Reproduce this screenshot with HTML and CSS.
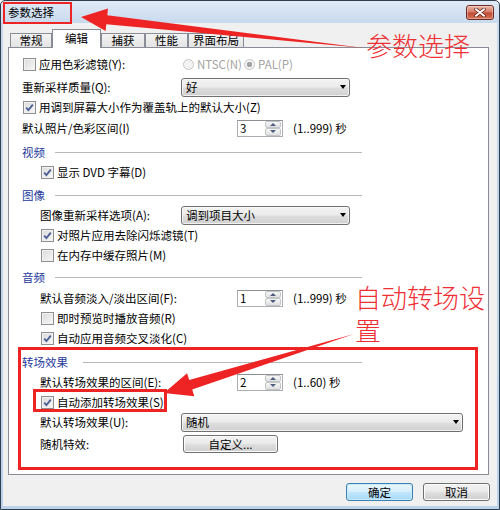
FILE: index.html
```html
<!DOCTYPE html>
<html lang="zh-CN">
<head>
<meta charset="utf-8">
<title>参数选择</title>
<link rel="stylesheet" href="styles.css">
</head>
<body>
<div class="screen">
  <div class="window">
    <div class="titlebar">
      <span class="title">参数选择</span>
      <span class="close"><svg width="12" height="9" viewBox="0 0 12 9"><path d="M2 1.2 L10 7.8 M10 1.2 L2 7.8" stroke="#5a1c14" stroke-width="3.4" stroke-linecap="round"/><path d="M2 1.2 L10 7.8 M10 1.2 L2 7.8" stroke="#fff" stroke-width="2" stroke-linecap="round"/></svg></span>
    </div>
    <div class="client">
      <div class="tabs">
        <div class="tab w42">常规</div>
        <div class="tab active">编辑</div>
        <div class="tab w44">捕获</div>
        <div class="tab w43">性能</div>
        <div class="tab w56">界面布局</div>
      </div>
      <div class="panel">
        <div class="row">
          <div class="lbl"><span class="cb"></span>应用色彩滤镜(Y):</div>
          <div class="radios">
            <span class="radio"><span class="dot"></span>NTSC(N)</span>
            <span class="radio on"><span class="dot"></span>PAL(P)</span>
          </div>
        </div>
        <div class="row gap3">
          <div class="lbl">重新采样质量(Q):</div>
          <div class="combo"><span>好</span></div>
        </div>
        <div class="row">
          <span class="cb on"><svg width="11" height="11" viewBox="0 0 11 11"><path d="M2.2 5.6 L4.4 8 L8.8 2.6" fill="none" stroke="#4b5e93" stroke-width="1.8"/></svg></span>用调到屏幕大小作为覆盖轨上的默认大小(Z)
        </div>
        <div class="row gap1">
          <div class="lbl">默认照片/色彩区间(I)</div>
          <div class="spin"><span class="spin-val">3</span><span class="spin-btns"><span class="up"></span><span class="down"></span></span></div>
          <span class="range">(1..999) 秒</span>
        </div>

        <div class="sec gap4">视频</div>
        <div class="row sub">
          <span class="cb on"><svg width="11" height="11" viewBox="0 0 11 11"><path d="M2.2 5.6 L4.4 8 L8.8 2.6" fill="none" stroke="#4b5e93" stroke-width="1.8"/></svg></span>显示 DVD 字幕(D)
        </div>

        <div class="sec gap3">图像</div>
        <div class="row sub">
          <div class="lbl">图像重新采样选项(A):</div>
          <div class="combo"><span>调到项目大小</span></div>
        </div>
        <div class="row sub">
          <span class="cb on"><svg width="11" height="11" viewBox="0 0 11 11"><path d="M2.2 5.6 L4.4 8 L8.8 2.6" fill="none" stroke="#4b5e93" stroke-width="1.8"/></svg></span>对照片应用去除闪烁滤镜(T)
        </div>
        <div class="row sub">
          <span class="cb"></span>在内存中缓存照片(M)
        </div>

        <div class="sec gap2">音频</div>
        <div class="row sub gap1">
          <div class="lbl">默认音频淡入/淡出区间(F):</div>
          <div class="spin"><span class="spin-val">1</span><span class="spin-btns"><span class="up"></span><span class="down"></span></span></div>
          <span class="range">(1..999) 秒</span>
        </div>
        <div class="row sub">
          <span class="cb"></span>即时预览时播放音频(R)
        </div>
        <div class="row sub">
          <span class="cb on"><svg width="11" height="11" viewBox="0 0 11 11"><path d="M2.2 5.6 L4.4 8 L8.8 2.6" fill="none" stroke="#4b5e93" stroke-width="1.8"/></svg></span>自动应用音频交叉淡化(C)
        </div>

        <div class="sec long gap4">转场效果</div>
        <div class="row sub">
          <div class="lbl">默认转场效果的区间(E):</div>
          <div class="spin"><span class="spin-val">2</span><span class="spin-btns"><span class="up"></span><span class="down"></span></span></div>
          <span class="range">(1..60) 秒</span>
        </div>
        <div class="row sub">
          <span class="cb on"><svg width="11" height="11" viewBox="0 0 11 11"><path d="M2.2 5.6 L4.4 8 L8.8 2.6" fill="none" stroke="#4b5e93" stroke-width="1.8"/></svg></span>自动添加转场效果(S)
        </div>
        <div class="row sub">
          <div class="lbl">默认转场效果(U):</div>
          <div class="combo wide"><span>随机</span></div>
        </div>
        <div class="row sub gap2">
          <div class="lbl">随机特效:</div>
          <div class="btn custom">自定义...</div>
        </div>
      </div>
      <div class="buttons">
        <div class="btn ok">确定</div>
        <div class="btn">取消</div>
      </div>
    </div>
  </div>

  <div class="mark m-title"></div>
  <div class="mark m-group"></div>
  <div class="mark m-check"></div>
  <div class="note n1">参数选择</div>
  <div class="note n2">自动转场设置</div>
  <svg class="arrows" width="500" height="510" viewBox="0 0 500 510">
    <polygon points="81,17 108,8.5 107.3,15.3 364,48 106.3,24.3 105.6,31" fill="#ee2424"/>
    <polygon points="164,393 187.1,373.2 189.2,379.9 354,334 192.2,389.5 194.3,396.2" fill="#ee2424"/>
  </svg>
</div>
</body>
</html>
```

FILE: styles.css
```css
* { box-sizing: border-box; }
html, body { margin: 0; padding: 0; }
body {
  font: 11.5px/20px "Noto Sans CJK SC", "Noto Sans", sans-serif;
  color: #000;
  background: #fff;
}
.screen { position: relative; width: 500px; height: 510px; overflow: hidden; }

.window {
  width: 500px;
  height: 510px;
  border: 1px solid #2f3d4c;
  border-radius: 5px 5px 0 0;
  background: linear-gradient(#e1eaf6, #c6d8ed 24px, #bcd2ea);
  padding: 0 2px 3px 2px;
  display: flex;
  flex-direction: column;
}
.titlebar {
  height: 22px;
  flex: none;
  display: flex;
  align-items: center;
  justify-content: space-between;
  padding: 0 3px 0 5px;
}
.title { line-height: 16px; }
.close {
  width: 28px;
  height: 15px;
  border: 1px solid #6b2a22;
  border-radius: 3px;
  background: linear-gradient(#ebb5a7, #d67d69 45%, #c24a34 55%, #d2735a);
  box-shadow: inset 0 0 0 1px rgba(255,255,255,.35);
  display: flex;
  align-items: center;
  justify-content: center;
}

.client {
  flex: 1;
  background: #f0f0f0;
  padding: 6px 8px 0 5px;
  display: flex;
  flex-direction: column;
}

.tabs {
  height: 18px;
  display: flex;
  align-items: flex-end;
  padding-left: 2px;
}
.tab {
  height: 14px;
  line-height: 13px;
  border: 1px solid #898c95;
  border-bottom: none;
  background: linear-gradient(#f3f3f3, #e4e4e4);
  text-align: center;
}
.w42 { width: 42px; }
.w43 { width: 43px; }
.w44 { width: 44px; }
.w56 { width: 56px; }
.tab.active {
  width: 49px;
  height: 19px;
  line-height: 17px;
  margin-bottom: -1px;
  background: #fff;
  position: relative;
  z-index: 2;
}

.panel {
  height: 428px;
  border: 1px solid #898c95;
  background: #fff;
  padding: 6px 0 0 13px;
  position: relative;
  z-index: 1;
}

.row { display: flex; align-items: center; height: 20px; white-space: nowrap; }
.sub { padding-left: 18px; }
.lbl { display: flex; align-items: center; width: 159px; flex: none; }
.sub .lbl { width: 141px; }
.gap1 { margin-top: 1px; }
.gap2 { margin-top: 2px; }
.gap3 { margin-top: 3px; }
.gap4 { margin-top: 4px; }

.cb {
  width: 13px;
  height: 13px;
  flex: none;
  border: 1px solid #8e8f8f;
  background: linear-gradient(135deg, #d9d9d9, #f9f9f9);
  box-shadow: inset 0 0 0 1px #f2f2f2;
  margin: 0 3px 0 1px;
  display: inline-flex;
  align-items: center;
  justify-content: center;
}

.radios { display: flex; margin-left: 2px; color: #a3a3a3; }
.radio { display: flex; align-items: center; }
.radio:first-child { width: 61px; }
.dot {
  width: 11px;
  height: 11px;
  flex: none;
  border-radius: 50%;
  border: 1px solid #c6c6c6;
  background: #f3f3f3;
  margin-right: 3px;
}
.radio.on .dot { background: radial-gradient(circle, #a3a3a3 0 2.5px, #f3f3f3 3px); }

.combo {
  width: 169px;
  height: 19px;
  border: 1px solid #707070;
  border-radius: 3px;
  background: linear-gradient(#f3f3f3, #ebebeb 45%, #dddddd 55%, #d0d0d0);
  box-shadow: inset 0 0 0 1px rgba(255,255,255,.7);
  display: flex;
  align-items: center;
  justify-content: space-between;
  padding: 0 3px 0 4px;
  line-height: 17px;
}
.combo::after {
  content: "";
  border-left: 3.5px solid transparent;
  border-right: 3.5px solid transparent;
  border-top: 4px solid #000;
}
.combo.wide { width: 282px; }

.spin {
  margin-left: 56px;
  width: 46px;
  height: 17px;
  border: 1px solid #abadb3;
  border-top-color: #8c8f94;
  background: #fff;
  display: flex;
  padding: 0 1px 0 0;
}
.spin-val { flex: 1; padding-left: 2px; line-height: 15px; }
.spin-btns { width: 16px; display: flex; flex-direction: column; }
.spin-btns span {
  flex: 1;
  border: 1px solid #c2c4c8;
  border-radius: 2px;
  background: linear-gradient(#f7f7f7, #e0e0e0);
  display: flex;
  align-items: center;
  justify-content: center;
}
.up::after {
  content: "";
  border-left: 3px solid transparent;
  border-right: 3px solid transparent;
  border-bottom: 3px solid #4d5d80;
}
.down::after {
  content: "";
  border-left: 3px solid transparent;
  border-right: 3px solid transparent;
  border-top: 3px solid #4d5d80;
}
.range { margin-left: 10px; }

.sec {
  display: flex;
  align-items: center;
  width: 340px;
  height: 20px;
  color: #1e3a9c;
}
.sec::after {
  content: "";
  flex: 1;
  height: 1px;
  background: #b8b8b8;
  margin-left: 10px;
}
.sec.long::after { margin-left: 15px; }

.btn {
  height: 18px;
  border: 1px solid #707070;
  border-radius: 3px;
  background: linear-gradient(#f2f2f2, #ebebeb 45%, #dddddd 55%, #cfcfcf);
  box-shadow: inset 0 0 0 1px #fcfcfc;
  display: flex;
  align-items: center;
  justify-content: center;
  line-height: 16px;
}
.custom { width: 95px; margin-left: 2px; }

.buttons {
  margin-top: 8px;
  margin-right: -1px;
  display: flex;
  justify-content: flex-end;
  gap: 10px;
}
.buttons .btn { width: 67px; }
.btn.ok {
  border-color: #3c7fb1;
  background: linear-gradient(#eaf6fd, #d9f0fc 45%, #bee6fd 55%, #a7d9f5);
  box-shadow: inset 0 0 0 1px #c8ecfc;
}

.mark { position: absolute; z-index: 10; border: 3px solid #ee2424; }
.m-title { left: 3px; top: 2px; width: 69px; height: 22px; border-width: 2px; }
.m-group { left: 18px; top: 347px; width: 460px; height: 123px; }
.m-check { left: 33px; top: 389px; width: 134px; height: 23px; }

.note {
  position: absolute;
  z-index: 10;
  color: #ee3034;
  font-size: 26px;
  font-weight: 300;
}
.n1 { left: 366px; top: 32px; line-height: 26px; }
.n2 { left: 355px; top: 280px; width: 134px; line-height: 33px; }

.arrows { position: absolute; z-index: 11; left: 0; top: 0; pointer-events: none; }
```
